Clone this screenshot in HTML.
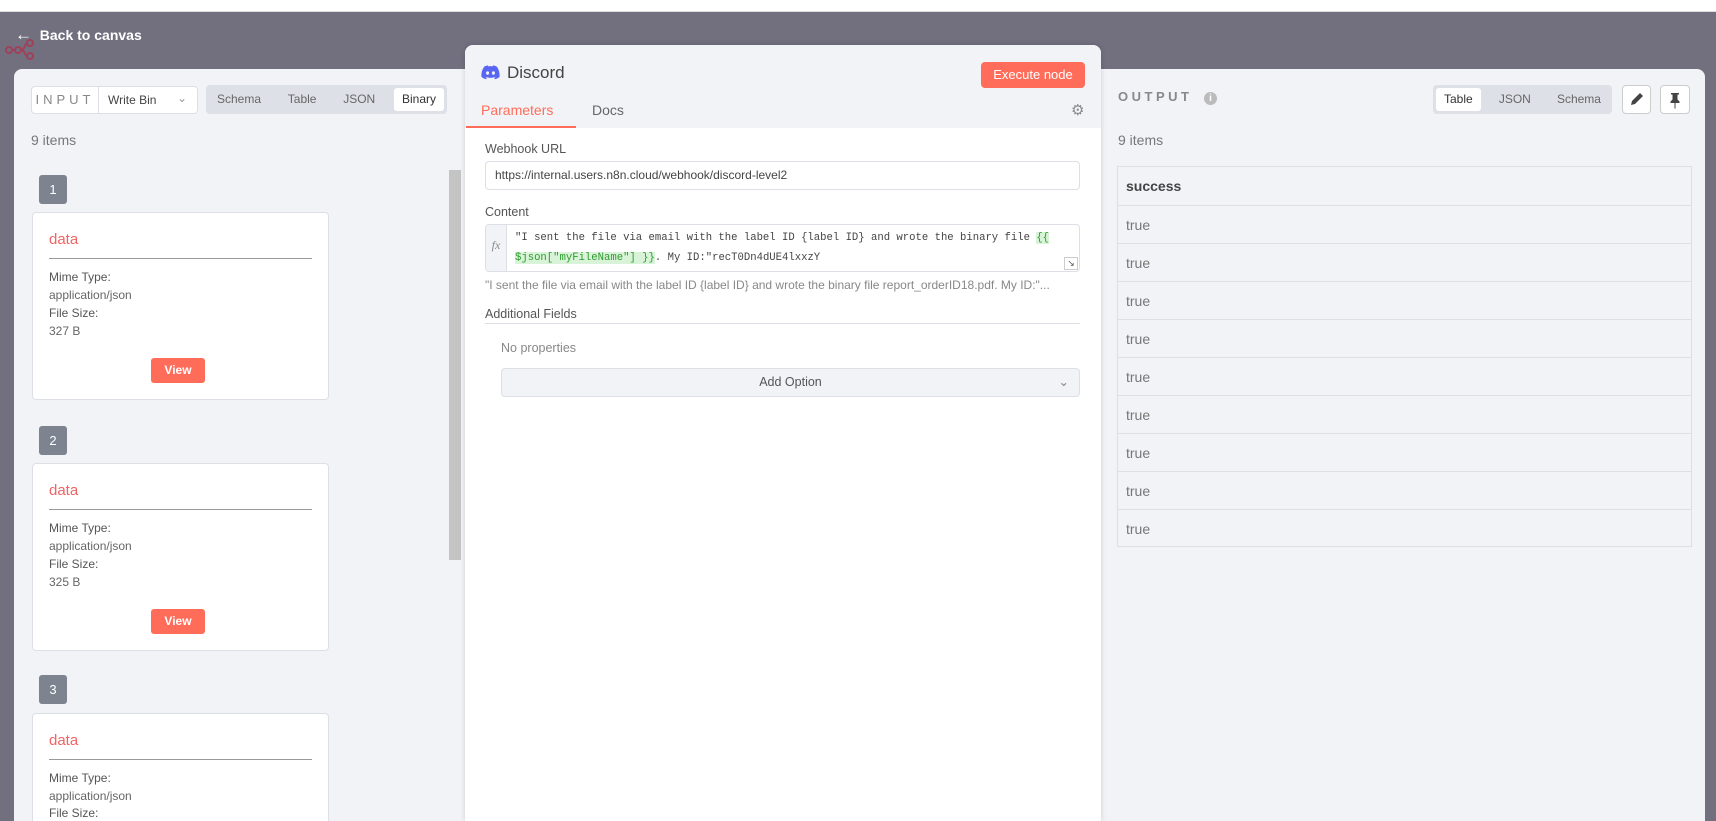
<!DOCTYPE html>
<html><head><meta charset="utf-8"><style>
*{box-sizing:border-box;margin:0;padding:0}
html{width:1716px;height:821px;overflow:hidden}
body{width:1716px;height:821px;overflow:hidden;background:#72707f;font-family:"Liberation Sans",sans-serif;position:relative;color:#555}
.abs{position:absolute}
.topbar{left:0;top:0;width:1716px;height:12px;background:#fff;border-bottom:1px solid #ddd}
.back{left:15px;top:25px;color:#fff;font-weight:bold;font-size:14px}
.lp{left:14px;top:69px;width:470px;height:752px;background:#f2f3f7;border-radius:8px 0 0 0}
.rp{left:1090px;top:69px;width:615px;height:752px;background:#f2f3f7;border-radius:0 8px 0 0}
.mp{left:465px;top:45px;width:636px;height:776px;background:#fff;border-radius:8px 8px 0 0;box-shadow:0 0 6px rgba(0,0,0,.15);overflow:hidden}
.inbox{left:31px;top:86px;width:167px;height:28px;border:1px solid #dcdfe6;background:#fff;border-radius:4px;font-size:13px}
.tabs{background:#dde0e7;border-radius:4px;height:29px;display:flex;align-items:center;justify-content:space-between;padding:0 3px;font-size:12px;color:#666}
.tabs span{padding:0 8px;height:23px;line-height:23px;border-radius:3px}
.tabs span.on{background:#fff;color:#333}
.badge{left:39px;width:28px;height:29px;background:#7d838f;border-radius:3px;color:#fff;font-size:13px;text-align:center;line-height:29px}
.card{left:32px;width:297px;height:188px;background:#fff;border:1px solid #dcdfe6;border-radius:4px;font-size:12px;color:#666;overflow:hidden}
.card .t{position:absolute;left:16px;top:18px;font-size:15px;color:#ef6464}
.card .ln{position:absolute;left:16px;right:16px;top:45px;border-top:1px solid #999}
.card .f{position:absolute;left:16px;line-height:18px}
.card .v{position:absolute;left:118px;top:145px;width:54px;height:25px;background:#ff6d5a;color:#fff;font-weight:bold;border-radius:3px;text-align:center;line-height:25px;font-size:12px}
.mono{font-family:"Liberation Mono",monospace}
.row{position:absolute;left:0;width:574px;height:38px;border-top:1px solid #dcdfe6;padding-left:8px;line-height:38px;font-size:14px;color:#777}
</style></head><body>
<div class="abs topbar"></div>
<svg class="abs" style="left:4px;top:38px" width="36" height="22"><g fill="none" stroke="#a0405a" stroke-width="2"><circle cx="5" cy="12" r="3"/><circle cx="14" cy="12" r="3"/><circle cx="26" cy="5" r="3"/><circle cx="26" cy="18" r="3"/><path d="M8 12h3M17 12c4 0 4-7 6-7M17 12c4 0 4 6 6 6"/></g></svg>
<div class="abs back"><span style="font-size:17px">&#8592;</span>&nbsp; Back to canvas</div>

<div class="abs lp"></div>
<div class="abs inbox"><span style="position:absolute;left:0;top:0;width:67px;height:26px;border-right:1px solid #dcdfe6;line-height:26px;text-align:center;letter-spacing:4px;color:#888;font-size:13px">INPUT</span><span style="position:absolute;left:76px;line-height:26px;font-size:12px;color:#444">Write Bin</span><span style="position:absolute;left:145px;top:4px;color:#999;font-size:12px">&#8964;</span></div>
<div class="abs tabs" style="left:206px;top:85px;width:241px"><span>Schema</span><span>Table</span><span>JSON</span><span class="on">Binary</span></div>
<div class="abs" style="left:31px;top:132px;font-size:14px;color:#777">9 items</div>
<div class="abs" style="left:449px;top:170px;width:12px;height:390px;background:#c4c4c4"></div>

<div class="abs badge" style="top:175px">1</div>
<div class="abs card" style="top:212px"><div class="t">data</div><div class="ln"></div><div class="f" style="top:55px;color:#555">Mime Type:</div><div class="f" style="top:73px">application/json</div><div class="f" style="top:91px;color:#555">File Size:</div><div class="f" style="top:109px">327 B</div><div class="v">View</div></div>
<div class="abs badge" style="top:426px">2</div>
<div class="abs card" style="top:463px"><div class="t">data</div><div class="ln"></div><div class="f" style="top:55px;color:#555">Mime Type:</div><div class="f" style="top:73px">application/json</div><div class="f" style="top:91px;color:#555">File Size:</div><div class="f" style="top:109px">325 B</div><div class="v">View</div></div>
<div class="abs badge" style="top:675px">3</div>
<div class="abs card" style="top:713px;height:108px;border-bottom:none;border-radius:4px 4px 0 0"><div class="t">data</div><div class="ln"></div><div class="f" style="top:55px;color:#555">Mime Type:</div><div class="f" style="top:73px">application/json</div><div class="f" style="top:90px;color:#555">File Size:</div></div>

<div class="abs rp"></div>
<div class="abs" style="left:1118px;top:89px;letter-spacing:3.5px;color:#888;font-size:13px;font-weight:bold">OUTPUT</div>
<div class="abs" style="left:1204px;top:92px;width:13px;height:13px;border-radius:50%;background:#bbb;color:#fff;font-size:10px;text-align:center;line-height:13px;font-weight:bold">i</div>
<div class="abs tabs" style="left:1433px;top:85px;width:179px"><span class="on">Table</span><span>JSON</span><span>Schema</span></div>
<div class="abs" style="left:1622px;top:85px;width:29px;height:29px;border:1px solid #ccc;border-radius:4px;background:#fff"><svg width="27" height="27"><path d="M8 19l1-4 8-8 3 3-8 8z" fill="#444"/></svg></div>
<div class="abs" style="left:1660px;top:85px;width:30px;height:29px;border:1px solid #ccc;border-radius:4px;background:#fff"><svg width="28" height="27"><path d="M10 7h8v1.5h-1.5v5l2 2v1.5h-4v5l-0.5 1-0.5-1v-5h-4v-1.5l2-2v-5H10z" fill="#444"/></svg></div>
<div class="abs" style="left:1118px;top:132px;font-size:14px;color:#777">9 items</div>
<div class="abs" style="left:1117px;top:166px;width:575px;height:381px;border:1px solid #dcdfe6;border-top:none;background:#f2f3f7">
<div class="row" style="top:0;font-weight:bold;color:#444;height:39px">success</div>
<div class="row" style="top:39px">true</div><div class="row" style="top:77px">true</div><div class="row" style="top:115px">true</div><div class="row" style="top:153px">true</div><div class="row" style="top:191px">true</div><div class="row" style="top:229px">true</div><div class="row" style="top:267px">true</div><div class="row" style="top:305px">true</div><div class="row" style="top:343px">true</div>
</div>

<div class="abs mp">
 <div style="position:absolute;left:0;top:0;width:636px;height:83px;background:#f2f3f7"></div>
 <svg style="position:absolute;left:16px;top:20px" width="19" height="15" viewBox="0 0 24 18"><path d="M20 1.5A19 19 0 0 0 15.3 0l-.6 1.2a18 18 0 0 0-5.4 0L8.7 0A19 19 0 0 0 4 1.5C1 6 .2 10.4.6 14.7A19 19 0 0 0 6.4 17.600l1.2-1.9a12 12 0 0 1-1.9-.9l.5-.4a13.6 13.6 0 0 0 11.6 0l.5.4a12 12 0 0 1-1.9.9l1.2 1.9a19 19 0 0 0 5.8-2.9c.5-5-.8-9.4-3.4-13.2zM8.3 12c-1.1 0-2-1-2-2.3s.9-2.3 2-2.3 2 1 2 2.3-.9 2.3-2 2.3zm7.4 0c-1.1 0-2-1-2-2.3s.9-2.3 2-2.3 2 1 2 2.3-.9 2.3-2 2.3z" fill="#5865f2"/></svg>
 <div style="position:absolute;left:42px;top:18px;font-size:17px;color:#444">Discord</div>
 <div style="position:absolute;left:516px;top:17px;width:104px;height:26px;background:#ff6d5a;border-radius:4px;color:#fff;font-size:13px;text-align:center;line-height:26px">Execute node</div>
 <div style="position:absolute;left:16px;top:57px;font-size:14px;color:#ff6d5a">Parameters</div>
 <div style="position:absolute;left:1px;top:81px;width:110px;height:2px;background:#ff6d5a"></div>
 <div style="position:absolute;left:127px;top:57px;font-size:14px;color:#666">Docs</div>
 <div style="position:absolute;left:606px;top:56px;font-size:15px;color:#888">&#9881;</div>
 <div style="position:absolute;left:20px;top:97px;font-size:12.5px;color:#555">Webhook URL</div>
 <div style="position:absolute;left:20px;top:116px;width:595px;height:29px;border:1px solid #dcdfe6;border-radius:4px;font-size:12px;line-height:27px;padding-left:9px;color:#444">https://internal.users.n8n.cloud/webhook/discord-level2</div>
 <div style="position:absolute;left:20px;top:160px;font-size:12.5px;color:#555">Content</div>
 <div style="position:absolute;left:20px;top:179px;width:595px;height:48px;border:1px solid #dcdfe6;border-radius:4px;overflow:hidden">
  <div style="position:absolute;left:0;top:0;width:21px;height:48px;background:#f2f3f7;border-right:1px solid #dcdfe6;font-family:'Liberation Serif',serif;font-style:italic;font-size:12px;color:#888;text-align:center;line-height:40px">fx</div>
  <div class="mono" style="position:absolute;left:29px;top:3px;font-size:10.6px;line-height:20px;color:#444;white-space:nowrap">"I sent the file via email with the label ID {label ID} and wrote the binary file <span style="background:#d8f3d8;color:#2e9c2e">{{</span><br><span style="background:#d8f3d8;color:#2e9c2e">$json["myFileName"] }}</span>. My ID:"recT0Dn4dUE4lxxzY</div>
  <div style="position:absolute;right:1px;bottom:1px;width:14px;height:13px;border:1px solid #ccc;background:#fff;font-size:9px;text-align:center;line-height:11px">&#8600;</div>
 </div>
 <div style="position:absolute;left:20px;top:233px;font-size:12px;color:#888;white-space:nowrap">"I sent the file via email with the label ID {label ID} and wrote the binary file report_orderID18.pdf. My ID:"...</div>
 <div style="position:absolute;left:20px;top:262px;font-size:12.5px;color:#555">Additional Fields</div>
 <div style="position:absolute;left:20px;top:278px;width:595px;border-top:1px solid #dcdfe6"></div>
 <div style="position:absolute;left:36px;top:296px;font-size:12.5px;color:#888">No properties</div>
 <div style="position:absolute;left:36px;top:323px;width:579px;height:29px;border:1px solid #dcdfe6;border-radius:4px;background:#f2f3f7;text-align:center;line-height:27px;font-size:12.5px;color:#555">Add Option<span style="position:absolute;right:10px;color:#888">&#8964;</span></div>
</div>
</body></html>
